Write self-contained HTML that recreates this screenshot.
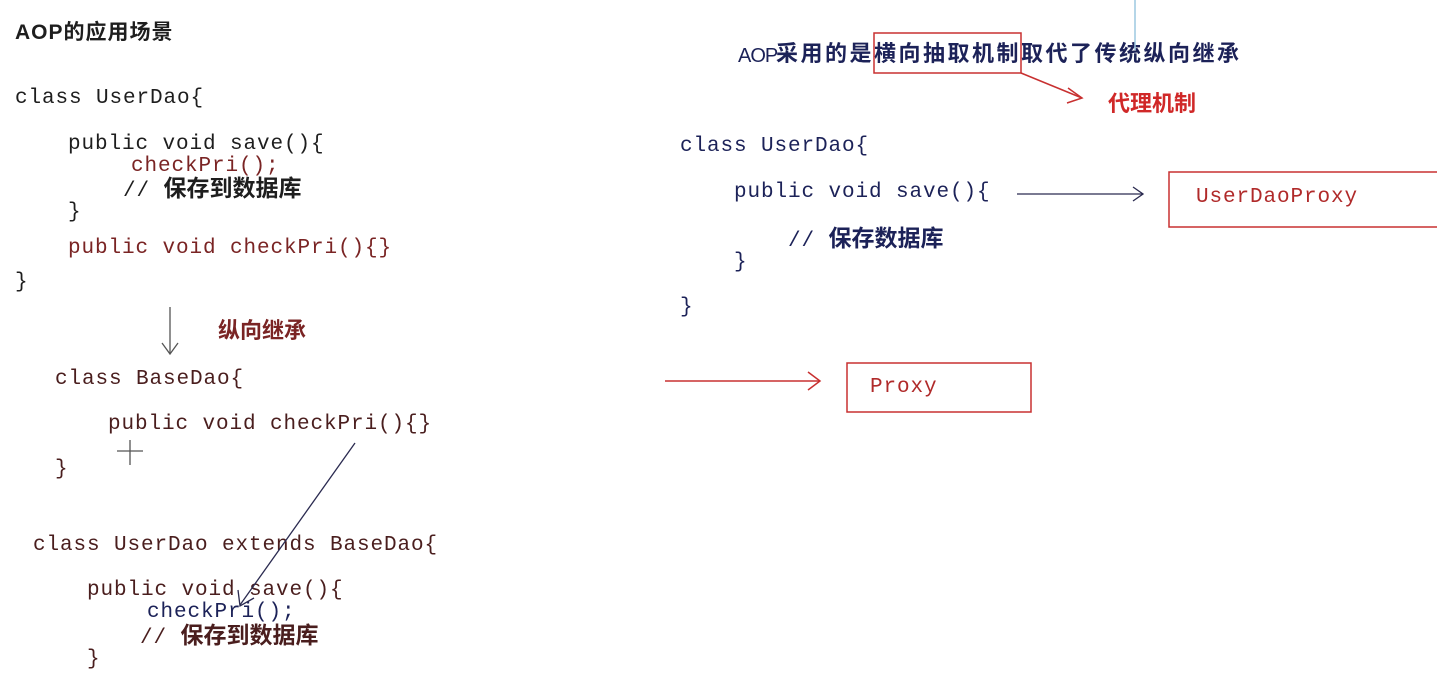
<!DOCTYPE html>
<html><head><meta charset="utf-8"><style>
body{margin:0;width:1437px;height:695px;background:#fff;position:relative;overflow:hidden;font-family:"Liberation Mono","Noto Sans CJK SC",monospace;}
.t{position:absolute;white-space:pre;font-size:21px;line-height:24px;letter-spacing:0.9px;color:#1e1e1e;}
.cj{font-family:"Liberation Sans","Noto Sans CJK SC",sans-serif;font-weight:bold;letter-spacing:0;}
.r{color:#7a2424}.br{color:#4a1e1e}.nv{color:#1c2258}.rd{color:#d02828}
</style></head><body>
<div class="t cj" style="left:15px;top:21px;font-size:21px;letter-spacing:1px">AOP的应用场景</div>
<div class="t" style="left:15px;top:87px">class UserDao{</div>
<div class="t" style="left:68px;top:133px">public void save(){</div>
<div class="t r" style="left:131px;top:155px">checkPri();</div>
<div class="t" style="left:123px;top:176px">// <span class="cj" style="font-size:23px">保存到数据库</span></div>
<div class="t" style="left:68px;top:201px">}</div>
<div class="t r" style="left:68px;top:237px">public void checkPri(){}</div>
<div class="t" style="left:15px;top:271px">}</div>
<div class="t cj r" style="left:218px;top:319px;font-size:22px">纵向继承</div>
<div class="t br" style="left:55px;top:368px">class BaseDao{</div>
<div class="t br" style="left:108px;top:413px">public void checkPri(){}</div>
<div class="t br" style="left:55px;top:458px">}</div>
<div class="t br" style="left:33px;top:534px">class UserDao extends BaseDao{</div>
<div class="t br" style="left:87px;top:579px">public void save(){</div>
<div class="t nv" style="left:147px;top:601px">checkPri();</div>
<div class="t br" style="left:140px;top:623px">// <span class="cj" style="font-size:23px">保存到数据库</span></div>
<div class="t br" style="left:87px;top:648px">}</div>

<div class="t nv" style="left:738px;top:44px;font-size:20px;letter-spacing:-1px;font-family:'Liberation Sans',sans-serif">AOP</div>
<div class="t cj nv" style="left:776px;top:42px;font-size:22px;letter-spacing:2.5px">采用的是横向抽取机制取代了传统纵向继承</div>
<div class="t cj rd" style="left:1108px;top:92px;font-size:22px">代理机制</div>
<div class="t nv" style="left:680px;top:135px">class UserDao{</div>
<div class="t nv" style="left:734px;top:181px">public void save(){</div>
<div class="t nv" style="left:788px;top:226px">// <span class="cj" style="font-size:23px">保存数据库</span></div>
<div class="t nv" style="left:734px;top:251px">}</div>
<div class="t nv" style="left:680px;top:296px">}</div>
<div class="t rd" style="left:1196px;top:186px;color:#b02a2a">UserDaoProxy</div>
<div class="t rd" style="left:870px;top:376px;color:#b02a2a">Proxy</div>

<svg width="1437" height="695" style="position:absolute;left:0;top:0" fill="none">
<g stroke="#555" stroke-width="1.3">
<line x1="170" y1="307" x2="170" y2="353"/><polyline points="162,343 170,354 178,343"/>
<line x1="130" y1="440" x2="130" y2="465"/><line x1="117" y1="451" x2="143" y2="451"/>
</g>
<g stroke="#2a2a50" stroke-width="1.3">
<line x1="355" y1="443" x2="240" y2="605"/><polyline points="238,590 240,606 254,598"/>
<line x1="1017" y1="194" x2="1143" y2="194"/><polyline points="1133,187 1143,194 1133,201"/>
</g>
<g stroke="#c83030" stroke-width="1.5">
<rect x="874" y="33" width="147" height="40"/>
<line x1="1021" y1="73" x2="1082" y2="98"/><polyline points="1068,88 1082,98 1067,103"/>
<rect x="1169" y="172" width="270" height="55"/>
<line x1="665" y1="381" x2="820" y2="381"/><polyline points="808,372 820,381 808,390"/>
<rect x="847" y="363" width="184" height="49"/>
</g>
<line x1="1135" y1="0" x2="1135" y2="50" stroke="#9cc8e0" stroke-width="1.5"/>
</svg>
</body></html>
